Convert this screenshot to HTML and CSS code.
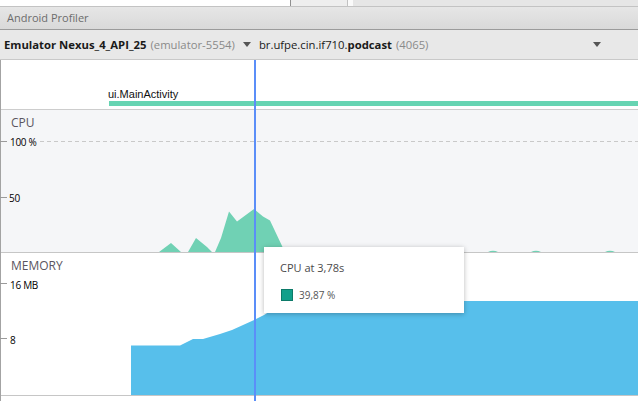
FILE: index.html
```html
<!DOCTYPE html>
<html>
<head>
<meta charset="utf-8">
<link rel="stylesheet" href="styles.css">
</head>
<body>
<div class="tabs">
  <div class="tab t1"></div>
  <div class="tab t2"></div>
  <div class="tab t3"></div>
  <div class="tab t4"></div>
</div>
<div class="titlebar">Android Profiler</div>
<div class="toolbar">
  <div class="combo device">
    <span class="strong">Emulator Nexus_4_API_25</span>
    <span class="muted">(emulator-5554)</span>
    <svg class="caret" width="8" height="5" viewBox="0 0 8 5"><path d="M0 0H8L4 5Z" fill="#555"/></svg>
  </div>
  <div class="combo process">
    <span class="proc">br.ufpe.cin.if710.<b>podcast</b></span>
    <span class="muted">(4065)</span>
    <svg class="caret end" width="8" height="5" viewBox="0 0 8 5"><path d="M0 0H8L4 5Z" fill="#555"/></svg>
  </div>
</div>
<div class="main">
  <div class="activity">
    <div class="act-label">ui.MainActivity</div>
    <div class="act-bar"></div>
  </div>
  <section class="chart cpu">
    <svg class="canvas" width="638" height="142" viewBox="0 0 638 142">
      <line x1="40" y1="31.5" x2="638" y2="31.5" stroke="#c9c9c9" stroke-width="1" stroke-dasharray="4 3"/>
      <line x1="0" y1="31.5" x2="7" y2="31.5" stroke="#9a9a9a"/>
      <line x1="0" y1="87.5" x2="7" y2="87.5" stroke="#9a9a9a"/>
      <polygon fill="#70d1b4" points="159,142 171,133 181,142 188,142 196,128 207,137 212,142 215,142 221,128 229,101.5 237,111.5 254,99 263,106.5 270,110.5 283,138 286,142"/>
      <path fill="#70d1b4" d="M488 142Q493 139.5 498 142ZM531 142Q536 139.5 541 142ZM605 142Q610 139.5 615 142Z"/>
    </svg>
    <div class="chart-title">CPU</div>
    <span class="axis a1">100 %</span>
    <span class="axis a2">50</span>
  </section>
  <section class="chart mem">
    <svg class="canvas" width="638" height="142" viewBox="0 0 638 142">
      <line x1="0" y1="30.5" x2="7" y2="30.5" stroke="#9a9a9a"/>
      <line x1="0" y1="85.5" x2="7" y2="85.5" stroke="#9a9a9a"/>
      <polygon fill="#57bfeb" points="131,142 131,92.5 180,92.5 193,86 203,86 220,81 232,77 253,67.5 264,62 280,52 292,48 638,48 638,142"/>
    </svg>
    <div class="chart-title">MEMORY</div>
    <span class="axis a3">16 MB</span>
    <span class="axis a4">8</span>
  </section>
  <div class="cursor"></div>
  <div class="tooltip">
    <div class="tt-title">CPU at 3,78s</div>
    <div class="tt-row"><span class="swatch"></span><span class="tt-val">39,87 %</span></div>
  </div>
</div>
</body>
</html>
```

FILE: styles.css
```css
* { box-sizing: border-box; }
html, body {
  margin: 0;
  padding: 0;
  width: 638px;
  height: 401px;
  overflow: hidden;
  background: #fff;
  font-family: "Open Sans", "Noto Sans", sans-serif;
}

.tabs {
  display: flex;
  height: 7px;
  border-bottom: 1px solid #c3c3c3;
}
.tab { height: 6px; }
.t1 { width: 291px; background: #fff; border-right: 1px solid #8f8f8f; }
.t2 { width: 57px; background: #eeeeee; border-right: 1px solid #c2c2c2; }
.t3 { width: 5px; background: #fafafa; }
.t4 { flex: 1; background: #e6e6e6; }

.titlebar {
  height: 23px;
  background: linear-gradient(#e6e6e6, #d9d9d9);
  border-bottom: 1px solid #9b9b9b;
  padding-left: 7px;
  font-size: 11px;
  line-height: 22px;
  color: #6c6c6c;
}

.toolbar {
  height: 30px;
  background: #e8e8e8;
  border-bottom: 1px solid #c9c9c9;
  display: flex;
  align-items: center;
  padding-left: 4px;
  font-size: 11.3px;
  color: #1a1a1a;
}
.combo {
  display: flex;
  align-items: center;
  white-space: nowrap;
}
.combo .muted { color: #8a8a8a; margin-left: 4px; }
.strong { font-weight: 700; }
.proc b { font-weight: 700; }
.device .caret { margin-left: 8px; }
.process { flex: 1; margin-left: 8px; }
.caret.end { margin-left: auto; margin-right: 37px; }

.main {
  position: relative;
  height: 342px;
  border-left: 1px solid #a3a3a3;
}

.activity {
  height: 50px;
  border-bottom: 1px solid #cdcdcd;
  display: flex;
  flex-direction: column;
  justify-content: flex-end;
  padding-bottom: 3px;
}
.act-label {
  margin-left: 107px;
  font-family: "Liberation Sans", Arial, sans-serif;
  font-size: 11px;
  line-height: 13px;
  color: #111;
}
.act-bar {
  margin-left: 108px;
  height: 5px;
  background: #66d4b2;
}

.chart {
  position: relative;
  height: 143px;
  border-bottom: 1px solid #c6c6c6;
}
.cpu { background: #f5f6f8; }
.mem { background: #fff; }
.canvas {
  position: absolute;
  left: -1px;
  top: 0;
}
.chart-title {
  position: relative;
  padding: 5px 0 0 10px;
  font-size: 12px;
  line-height: 16px;
  color: #5a5560;
}
.axis {
  position: absolute;
  font-size: 10px;
  line-height: 12px;
  letter-spacing: -0.3px;
  color: #000;
}
.a1 { left: 9px; top: 26px; }
.a2 { left: 8px; top: 82px; }
.a3 { left: 9px; top: 26px; }
.a4 { left: 9px; top: 81px; }

.cursor {
  position: absolute;
  left: 253px;
  top: 0;
  bottom: 0;
  width: 2px;
  background: #5b8ef8;
}

.tooltip {
  position: absolute;
  left: 263px;
  top: 187px;
  width: 200px;
  height: 66px;
  background: #fff;
  box-shadow: 0 1px 5px rgba(0, 0, 0, 0.28);
  padding: 13px 0 0 16px;
}
.tt-title {
  font-size: 11px;
  line-height: 16px;
  color: #4a4a4a;
}
.tt-row {
  display: flex;
  align-items: center;
  margin-top: 13px;
  padding-left: 1px;
}
.swatch {
  width: 12px;
  height: 12px;
  background: #12a08b;
  border: 1px solid #0d7a69;
}
.tt-val {
  margin-left: 6px;
  font-size: 10px;
  line-height: 12px;
  color: #555;
}
```
